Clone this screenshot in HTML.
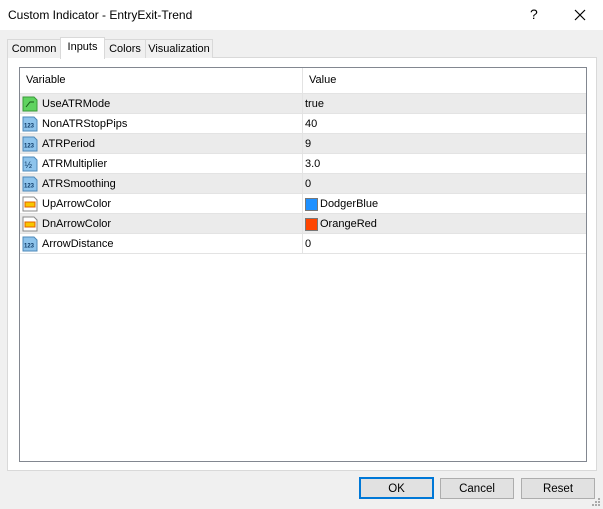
<!DOCTYPE html>
<html><head><style>
body{margin:0;width:603px;height:509px;background:#f0f0f0;font-family:"Liberation Sans",sans-serif;font-size:11px;color:#000;position:relative;overflow:hidden}
.title{position:absolute;left:0;top:0;width:603px;height:30px;background:#fff}
.title span{position:absolute;left:8px;top:8px;font-size:12px}
.abs{position:absolute}
.tab{position:absolute;top:39px;height:18px;border:1px solid #d9d9d9;border-bottom:none;background:#f0f0f0;line-height:19px;text-align:center;font-size:11px}
.panel{position:absolute;left:7px;top:57px;width:588px;height:412px;border:1px solid #d9d9d9;background:#fff}
.grid{position:absolute;left:19px;top:67px;width:566px;height:393px;border:1px solid #828790;background:#fff}
.row{position:absolute;left:0;width:566px;height:19px;border-bottom:1px solid #e3e3e3;line-height:21px}
.row .n{position:absolute;left:22px}
.row .v{position:absolute;left:285px}
.row .d{position:absolute;left:282px;top:0;width:1px;height:20px;background:#e3e3e3}
.g{background:#ebebeb}
.ic{position:absolute;left:2px;top:2px}
.btn{position:absolute;top:478px;height:19px;width:72px;border:1px solid #adadad;background:#e1e1e1;text-align:center;line-height:21px;font-size:11.5px}
</style></head><body>
<div class="title"><span>Custom Indicator - EntryExit-Trend</span>
<span style="left:530px;top:6px;font-size:14px">?</span>
<svg class="abs" style="left:574px;top:9px" width="12" height="12"><path d="M1 1L11 11M11 1L1 11" stroke="#000" stroke-width="1.2"/></svg></div>
<div class="panel"></div>
<div class="tab" style="left:7px;width:52px">Common</div>
<div class="tab" style="left:60px;top:37px;height:21px;width:43px;background:#fff;z-index:2">Inputs</div>
<div class="tab" style="left:104px;width:40px">Colors</div>
<div class="tab" style="left:145px;width:66px">Visualization</div>
<div class="grid">
<div class="row" style="top:0;height:25px;line-height:25px;border-bottom:1px solid #e3e3e3"><span style="position:absolute;left:6px">Variable</span><span style="position:absolute;left:289px">Value</span><div class="d" style="height:26px"></div></div>
<div class="row g" style="top:26px"><svg class="ic" width="16" height="16"><path d="M1 1h11l3 3v11H1z" fill="#5fd35f" stroke="#3a9a3a"/><path d="M4 11l4-5h4" stroke="#1a5a1a" fill="none"/></svg><span class="n">UseATRMode</span><div class="d"></div><span class="v">true</span></div>
<div class="row" style="top:46px"><svg class="ic" width="16" height="16"><path d="M1 1h11l3 3v11H1z" fill="#8ec4ec" stroke="#4d88b8"/><text x="2" y="11.5" font-size="6" font-family="Liberation Sans" fill="#0e3a66" font-weight="bold">123</text></svg><span class="n">NonATRStopPips</span><div class="d"></div><span class="v">40</span></div>
<div class="row g" style="top:66px"><svg class="ic" width="16" height="16"><path d="M1 1h11l3 3v11H1z" fill="#8ec4ec" stroke="#4d88b8"/><text x="2" y="11.5" font-size="6" font-family="Liberation Sans" fill="#0e3a66" font-weight="bold">123</text></svg><span class="n">ATRPeriod</span><div class="d"></div><span class="v">9</span></div>
<div class="row" style="top:86px"><svg class="ic" width="16" height="16"><path d="M1 1h11l3 3v11H1z" fill="#8ec4ec" stroke="#4d88b8"/><text x="2.5" y="12" font-size="9" font-family="Liberation Sans" fill="#0e3a66">½</text></svg><span class="n">ATRMultiplier</span><div class="d"></div><span class="v">3.0</span></div>
<div class="row g" style="top:106px"><svg class="ic" width="16" height="16"><path d="M1 1h11l3 3v11H1z" fill="#8ec4ec" stroke="#4d88b8"/><text x="2" y="11.5" font-size="6" font-family="Liberation Sans" fill="#0e3a66" font-weight="bold">123</text></svg><span class="n">ATRSmoothing</span><div class="d"></div><span class="v">0</span></div>
<div class="row" style="top:126px"><svg class="ic" width="16" height="16"><path d="M1 1h11l3 3v11H1z" fill="#fff" stroke="#888"/><rect x="3" y="6" width="10" height="5" fill="#f7c600" stroke="#e06000"/></svg><span class="n">UpArrowColor</span><div class="d"></div><span class="abs" style="left:285px;top:4px;width:11px;height:11px;background:#1e90ff;border:1px solid #777"></span><span class="v" style="left:300px">DodgerBlue</span></div>
<div class="row g" style="top:146px"><svg class="ic" width="16" height="16"><path d="M1 1h11l3 3v11H1z" fill="#fff" stroke="#888"/><rect x="3" y="6" width="10" height="5" fill="#f7c600" stroke="#e06000"/></svg><span class="n">DnArrowColor</span><div class="d"></div><span class="abs" style="left:285px;top:4px;width:11px;height:11px;background:#ff4500;border:1px solid #777"></span><span class="v" style="left:300px">OrangeRed</span></div>
<div class="row" style="top:166px"><svg class="ic" width="16" height="16"><path d="M1 1h11l3 3v11H1z" fill="#8ec4ec" stroke="#4d88b8"/><text x="2" y="11.5" font-size="6" font-family="Liberation Sans" fill="#0e3a66" font-weight="bold">123</text></svg><span class="n">ArrowDistance</span><div class="d"></div><span class="v">0</span></div>
</div>
<div class="btn" style="left:359px;border:2px solid #0078d7;top:477px;width:71px;height:18px">OK</div>
<div class="btn" style="left:440px">Cancel</div>
<div class="btn" style="left:521px">Reset</div>
<svg class="abs" style="left:591px;top:497px" width="10" height="10" fill="#aaa"><rect x="7" y="1" width="2" height="2"/><rect x="4" y="4" width="2" height="2"/><rect x="7" y="4" width="2" height="2"/><rect x="1" y="7" width="2" height="2"/><rect x="4" y="7" width="2" height="2"/><rect x="7" y="7" width="2" height="2"/></svg>
</body></html>
